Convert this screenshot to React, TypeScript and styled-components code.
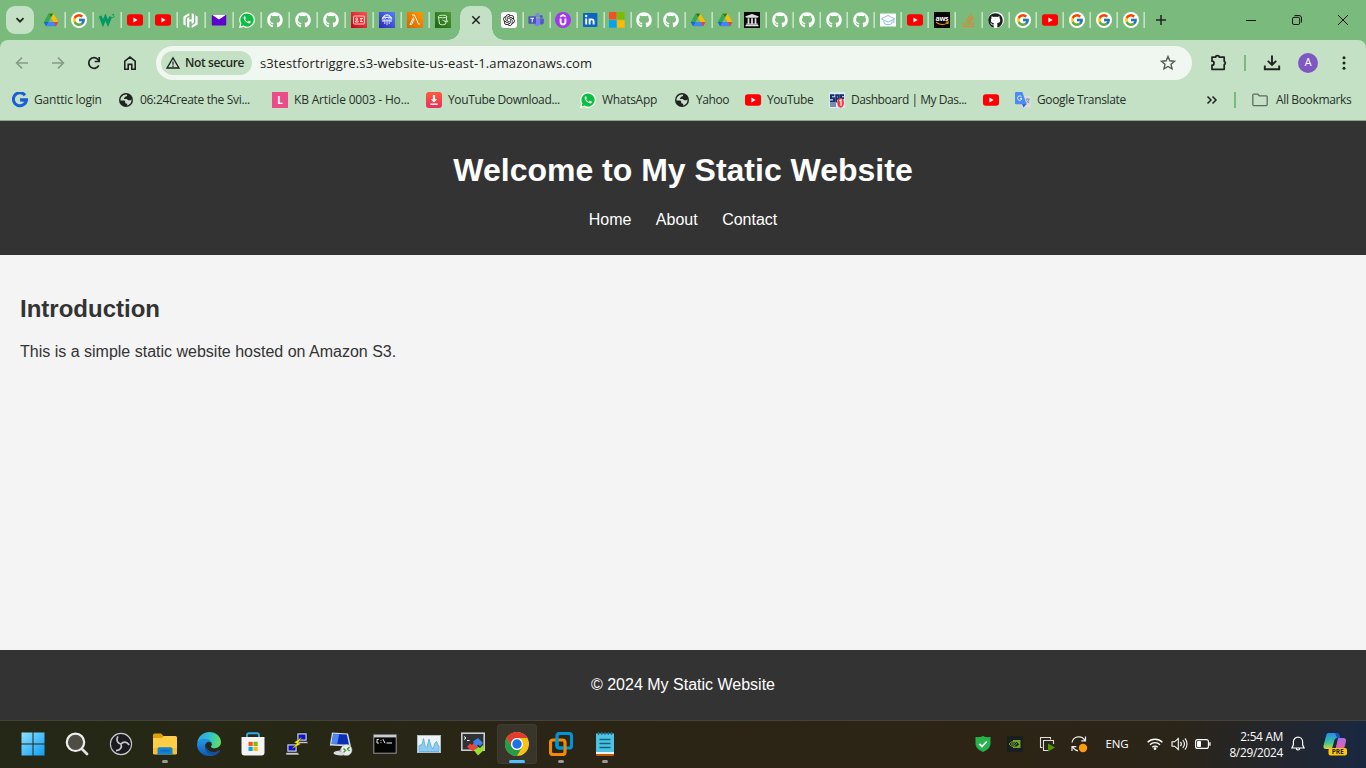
import React from 'react';
import styled, { createGlobalStyle } from 'styled-components';
import { FcGoogle } from 'react-icons/fc';
import { FaGithub, FaStackOverflow, FaUniversity } from 'react-icons/fa';
import { SiHashicorp } from 'react-icons/si';
import { RiOpenaiFill } from 'react-icons/ri';

const ui = '"Open Sans", "Noto Sans", sans-serif';

const Global = createGlobalStyle`
  * { box-sizing: border-box; }
  html, body { margin: 0; padding: 0; height: 768px; overflow: hidden; }
  svg { display: block; flex: none; }
`;

const Screen = styled.div`
  width: 1366px;
  height: 768px;
  display: flex;
  flex-direction: column;
  overflow: hidden;
  background: #f4f4f4;
`;

/* ---------- browser chrome ---------- */

const TabStrip = styled.div`
  height: 40px;
  flex: none;
  display: flex;
  align-items: center;
  background: #7abb7d;
  padding-left: 6px;
`;

const SearchTabs = styled.div`
  width: 28px;
  height: 28px;
  border-radius: 9px;
  background: #c5e1c5;
  display: grid;
  place-items: center;
  margin-right: 3px;
`;

const Tab = styled.div<{ $w: number; $last?: boolean }>`
  width: ${(p) => p.$w}px;
  height: 16px;
  flex: none;
  display: flex;
  align-items: center;
  padding-left: ${(p) => (p.$w - 16) / 2}px;
  box-shadow: ${(p) => (p.$last ? 'none' : '1px 0 0 #c5e1c5, inset -1px 0 0 #a9d2aa')};
`;

const ActiveTab = styled.div`
  width: 32px;
  height: 34px;
  margin: 6px 3.7px 0 3px;
  flex: none;
  display: grid;
  place-items: center;
  padding-bottom: 6px;
  background: #c5e1c5;
  border-radius: 10px 10px 0 0;
  position: relative;
  &::before,
  &::after {
    content: '';
    position: absolute;
    bottom: 0;
    width: 12px;
    height: 12px;
  }
  &::before {
    left: -12px;
    background: radial-gradient(circle at 0 0, transparent 11.5px, #c5e1c5 12px);
  }
  &::after {
    right: -12px;
    background: radial-gradient(circle at 100% 0, transparent 11.5px, #c5e1c5 12px);
  }
`;

const NewTab = styled.div`
  width: 16px;
  margin-left: 8.3px;
`;

const WindowButtons = styled.div`
  margin-left: auto;
  display: flex;
  width: 138px;
`;

const WindowButton = styled.div`
  width: 46px;
  display: grid;
  place-items: center;
`;

const ToolbarBack = styled.div`
  background: #7abb7d;
  flex: none;
`;

const ToolbarPanel = styled.div`
  height: 81px;
  background: #c5e1c5;
  border-radius: 8px 8px 0 0;
  border-bottom: 1px solid #8fa591;
`;

const Toolbar = styled.div`
  height: 46px;
  display: flex;
  align-items: center;
  padding-left: 4px;
`;

const ToolButton = styled.div<{ $w?: number }>`
  width: ${(p) => p.$w ?? 36}px;
  display: grid;
  place-items: center;
  flex: none;
`;

const AddressBar = styled.div`
  width: 1036px;
  height: 34px;
  margin-left: 8px;
  border-radius: 17px;
  background: #f0f7f0;
  display: flex;
  align-items: center;
  padding: 0 15px 0 5px;
  flex: none;
`;

const SecurityChip = styled.div`
  width: 91px;
  height: 24px;
  border-radius: 12px;
  background: #c5e1c5;
  display: flex;
  align-items: center;
  padding-left: 5px;
  gap: 5px;
  font: 600 12px/24px ${ui};
  letter-spacing: -0.4px;
  white-space: nowrap;
  color: #1f2a20;
`;

const Url = styled.div`
  margin-left: 8px;
  flex: 1;
  font: 400 13px/20px ${ui};
  letter-spacing: 0.12px;
  color: #1f2320;
`;

const Divider = styled.div`
  width: 2px;
  height: 16px;
  background: #7abb7d;
  flex: none;
`;

const Avatar = styled.div`
  width: 20px;
  height: 20px;
  border-radius: 50%;
  background: #7e57c2;
  color: #fff;
  font: 400 11px/20px Roboto, sans-serif;
  text-align: center;
`;

const Bookmarks = styled.div`
  height: 28px;
  display: flex;
  align-items: center;
  padding-left: 12px;
`;

const Bookmark = styled.div<{ $w: number; $ls?: number }>`
  width: ${(p) => p.$w}px;
  flex: none;
  display: flex;
  align-items: center;
  gap: 6px;
  white-space: nowrap;
  font: 400 12px/20px ${ui};
  letter-spacing: ${(p) => p.$ls ?? 0}px;
  color: #26302a;
`;

const AllBookmarks = styled(Bookmark)`
  margin-left: 16px;
  gap: 8px;
`;

/* ---------- web page ---------- */

const PageHeader = styled.header`
  height: 134px;
  flex: none;
  background: #333;
  color: #fff;
  text-align: center;
  font-family: Arial, "Liberation Sans", sans-serif;
  padding-top: 30px;
`;

const Title = styled.h1`
  margin: 0;
  font-size: 32px;
  line-height: 38px;
  font-weight: 700;
`;

const Nav = styled.nav`
  margin-top: 21px;
  font-size: 16px;
  line-height: 19px;
`;

const NavLink = styled.a`
  color: #fff;
  padding: 0 10px;
`;

const Main = styled.main`
  flex: 1;
  padding: 40px 20px 0;
  font-family: Arial, "Liberation Sans", sans-serif;
  color: #333;
  background: #f4f4f4;
`;

const SectionTitle = styled.h2`
  margin: 0;
  font-size: 24px;
  line-height: 28px;
`;

const Paragraph = styled.p`
  margin: 19px 0 0;
  font-size: 16px;
  line-height: 19px;
`;

const PageFooter = styled.footer`
  height: 70px;
  flex: none;
  background: #333;
  color: #fff;
  text-align: center;
  font: 400 16px/69px Arial, "Liberation Sans", sans-serif;
`;

/* ---------- taskbar ---------- */

const Taskbar = styled.div`
  height: 48px;
  flex: none;
  display: flex;
  align-items: center;
  padding-left: 11px;
  box-shadow: inset 0 1px 0 #46443a;
  background: linear-gradient(90deg, #252816 0%, #272716 22%, #2a2516 40%, #2d2415 72%, #2b2519 86%, #24262b 93%, #192840 100%);
  color: #fff;
`;

const AppButton = styled.div<{ $active?: boolean }>`
  width: 40px;
  height: 40px;
  margin: 0 2px;
  flex: none;
  display: grid;
  place-items: center;
  border-radius: 4px;
  position: relative;
  background: ${(p) => (p.$active ? '#39352a' : 'transparent')};
  box-shadow: ${(p) => (p.$active ? 'inset 0 0 0 1px #403c31' : 'none')};
`;

const Running = styled.div<{ $active?: boolean }>`
  position: absolute;
  bottom: 1px;
  left: 50%;
  transform: translateX(-50%);
  width: ${(p) => (p.$active ? 16 : 6)}px;
  height: 3px;
  border-radius: 2px;
  background: ${(p) => (p.$active ? '#4cc2ff' : '#9b9a93')};
`;

const Tray = styled.div`
  margin-left: auto;
  display: flex;
  align-items: center;
  height: 48px;
  width: 399px;
`;

const TrayItem = styled.div<{ $w: number }>`
  width: ${(p) => p.$w}px;
  flex: none;
  display: grid;
  place-items: center;
`;

const Language = styled.div`
  width: 44px;
  text-align: center;
  font: 400 11.5px/16px ${ui};
  letter-spacing: -0.2px;
`;

const Clock = styled.div`
  width: 64px;
  text-align: right;
  font: 400 11.8px/16px ${ui};
  letter-spacing: -0.25px;
  white-space: nowrap;
`;

/* ---------- site icons ---------- */

const Drive = () => (
  <svg width="16" height="16" viewBox="0 0 16 16">
    <path d="M5.6 1.4 8 5.6 3.2 13.9.9 9.9z" fill="#34a853" />
    <path d="M10.4 1.4 15.4 10h-4.8L5.6 1.4z" fill="#fbbc04" />
    <path d="M5.6 1.4h4.8L8 5.6z" fill="#188038" />
    <path d="M5.5 10h9.9l-2.4 4.2H3.1z" fill="#4285f4" />
    <path d="M10.6 10h4.8L13 14.2z" fill="#ea4335" />
    <path d="M.7 10h4.8l-2.4 4.2z" fill="#1967d2" />
  </svg>
);

const Disc = styled.div`
  width: 16px;
  height: 16px;
  border-radius: 50%;
  background: #fff;
  display: grid;
  place-items: center;
`;

const Google = () => (
  <Disc>
    <FcGoogle size={14} />
  </Disc>
);

const W3 = () => (
  <svg width="16" height="16" viewBox="0 0 16 16">
    <path d="M1.2 4 4 11.200 6.400 5.200l2.600 6 2.600-6.600" fill="none" stroke="#059862" strokeWidth="2.900" />
    <path d="M12.800 2.400h2.200l-1.100 1.200c1.600.1 1.400 2-.2 2-.6 0-1-.3-1.200-.7" fill="none" stroke="#059862" strokeWidth=".8" />
  </svg>
);

const YouTube = () => (
  <svg width="16" height="16" viewBox="0 0 16 16">
    <rect x="0" y="2.2" width="16" height="11.6" rx="2.8" fill="#f00" />
    <path d="M6.4 5.6v4.8L10.6 8z" fill="#fff" />
  </svg>
);

const Mail = () => (
  <svg width="16" height="16" viewBox="0 0 16 16">
    <rect x=".8" y="2.8" width="14.4" height="10.8" rx=".8" fill="#5f01d1" />
    <path d="M1 2.8h14L8.4 7.300a.7.7 0 0 1-.8 0z" fill="#fff" />
  </svg>
);

const WhatsApp = () => (
  <svg width="16" height="16" viewBox="0 0 16 16">
    <path d="M8 .2a7.8 7.8 0 0 0-6.9 11.4L.1 15.9l4.4-1A7.8 7.8 0 1 0 8 .2z" fill="#fff" />
    <path d="M8 1.4a6.6 6.6 0 0 0-5.6 10.1l-.7 2.8 2.9-.7A6.6 6.6 0 1 0 8 1.4z" fill="#09c03f" />
    <path d="M5.6 4.3c-.9.5-1.2 1.6-.7 2.7.9 2 2.2 3.4 4.4 4.3 1.1.4 2.2 0 2.5-1 .1-.6 0-.7-1.8-1.5-.5-.1-.7.9-1.1 1-.9-.1-2.6-1.7-2.8-2.5.1-.4.8-.7.6-1.3-.5-1.4-.6-1.7-1.1-1.7z" fill="#fff" />
  </svg>
);

const Square = styled.div<{ $bg: string; $r?: number }>`
  width: 16px;
  height: 16px;
  flex: none;
  border-radius: ${(p) => p.$r ?? 0}px;
  background: ${(p) => p.$bg};
  display: grid;
  place-items: center;
  color: #fff;
`;

const IdCard = () => (
  <Square $bg="linear-gradient(45deg,#bd0816,#ff5252)">
    <svg width="12" height="12" viewBox="0 0 12 12" fill="none" stroke="#ffe9e9" strokeWidth=".9">
      <rect x=".6" y="2" width="10.8" height="8" rx=".6" />
      <circle cx="3.7" cy="4.9" r="1" />
      <path d="M2.2 8V7.3c.6-.8 2.4-.8 3 0V8zM7 4.5h3M7 6h2M7 7.6h3" />
    </svg>
  </Square>
);

const Cognito = () => (
  <Square $bg="linear-gradient(45deg,#2e27ad,#527fff)">
    <svg width="12" height="12" viewBox="0 0 12 12" fill="none" stroke="#e4eaff" strokeWidth=".9">
      <path d="M1.200 5.500a4.800 4.800 0 0 1 9.600 0M2 8V5.500a4 4 0 0 1 8 0V8M3.800 10V5.500a2.200 2.200 0 0 1 4.400 0V10M6 5v6.200M1.200 3.500h9.600M1.500 6.800h9" />
    </svg>
  </Square>
);

const Lambda = () => (
  <Square $bg="linear-gradient(45deg,#d96300,#ff9900)">
    <svg width="12" height="12" viewBox="0 0 12 12" fill="none" stroke="#fff" strokeWidth="1">
      <path d="M3 1h2.5l4 9h1.4M5.2 4.9 2.6 10.6H.9L4.5 3.4" />
    </svg>
  </Square>
);

const Bucket = () => (
  <Square $bg="linear-gradient(45deg,#1b660f,#4f9a34)">
    <svg width="12" height="12" viewBox="0 0 12 12" fill="none" stroke="#eaf6e6" strokeWidth=".9">
      <ellipse cx="5.6" cy="2.5" rx="4.2" ry="1.3" />
      <path d="M1.4 2.6 2.6 10c1.6 1.1 4.4 1.1 6 0l1.2-7.4M5.4 6c1.6 1 4.2 2 5.2 1.6.6-.4-.3-1.2-1.2-1.7" />
    </svg>
  </Square>
);

const Teams = () => (
  <svg width="16" height="16" viewBox="0 0 16 16">
    <circle cx="13.2" cy="4.4" r="1.5" fill="#5059c9" />
    <circle cx="9.6" cy="3.2" r="2.1" fill="#7b83eb" />
    <path d="M11 6.4h4.3c.4 0 .5.2.5.5v3.4c0 3-4 3-4.4.4z" fill="#5059c9" />
    <path d="M6 6.4h6.2v4.6c0 4.4-6.2 4.2-6.2 0z" fill="#7b83eb" />
    <rect x=".4" y="4.2" width="7.6" height="7.6" rx=".7" fill="#4b53bc" />
    <path d="M2.4 6.3H6M4.2 6.3v4" stroke="#fff" strokeWidth="1" />
  </svg>
);

const Udemy = () => (
  <svg width="16" height="16" viewBox="0 0 16 16">
    <circle cx="8" cy="8" r="8" fill="#a435f0" />
    <path d="M5.2 4.7 8 3l2.8 1.7M5.6 6.4v3.7c0 3.2 4.8 3.2 4.8 0V6.4" fill="none" stroke="#fff" strokeWidth="1.9" />
  </svg>
);

const LinkedIn = () => (
  <svg width="16" height="16" viewBox="0 0 16 16">
    <rect x="1" y="1" width="14.4" height="14" rx="1" fill="#0a66c2" />
    <path d="M4.2 6.4v6.2M7.6 6.4v6.2M7.6 9.4c0-2.6 4-2.8 4-.2v3.4" fill="none" stroke="#fff" strokeWidth="1.9" />
    <circle cx="4.2" cy="4" r="1.2" fill="#fff" />
  </svg>
);

const Microsoft = () => (
  <svg width="16" height="16" viewBox="0 0 16 16">
    <path d="M0 0h7.5v7.5H0z" fill="#f25022" />
    <path d="M8.2 0h7.5v7.5H8.2z" fill="#7fba00" />
    <path d="M0 8.2h7.5v7.5H0z" fill="#00a4ef" />
    <path d="M8.2 8.2h7.5v7.5H8.2z" fill="#ffb900" />
  </svg>
);

const Cap = () => (
  <svg width="16" height="16" viewBox="0 0 16 16">
    <rect y="1.5" width="16" height="13" fill="#fff" />
    <path d="M1.5 6.8 8 3.4l6.5 3.4L8 10.2zM4 8.4v3c2.4 1.8 5.6 1.8 8 0v-3M13.8 7.2v4" fill="none" stroke="#6db0dc" strokeWidth=".8" />
  </svg>
);

const Hashicorp = () => <SiHashicorp size={15} color="#fff" />;
const StackOverflow = () => <FaStackOverflow size={15} color="#e9812b" />;
const GitHubWhite = () => <FaGithub size={16} color="#fff" />;
const GitHubDark = () => (
  <Disc>
    <FaGithub size={15} color="#1b1f23" />
  </Disc>
);
const OpenAI = () => (
  <Square $bg="#fff" $r={3}>
    <RiOpenaiFill size={14} color="#111" />
  </Square>
);
const Bank = () => (
  <Square $bg="#080808">
    <FaUniversity size={14} color="#ddd" />
  </Square>
);
const Aws = () => (
  <svg width="16" height="16" viewBox="0 0 16 16">
    <rect width="16" height="16" fill="#050505" />
    <text x="8" y="8.6" fontSize="7" fontWeight="700" textAnchor="middle" fill="#fff" fontFamily="Open Sans, sans-serif" textLength="13">aws</text>
    <path d="M2 10.2c4 2.8 8.4 2.8 11.6.7M11.8 10h2.5l-.6 2.2" fill="none" stroke="#f90" strokeWidth="1.1" />
  </svg>
);

const Globe = () => (
  <svg width="16" height="16" viewBox="0 0 16 16">
    <circle cx="8" cy="8" r="7" fill="#202322" />
    <path d="M8.6 2.500c1.300.7.2 2-.8 1.900-1 0-.7 1-1.500 1.300-.8.5-.4 1.200.4 1.200h1.900c.9 0 .8 1.200 1.600 1.400h1.600c1 0 1.500-.5 1.700-1 .3 2.800-1.400 5.600-4.300 6.200v-1c0-.7-.3-1-1-1-.8 0-1-.7-1-1.500 0-1-.7-1.500-1.500-1.500H2.500C2.300 5.500 4.500 2.300 8.600 2.500z" fill="#c5e1c5" />
  </svg>
);

const Ganttic = () => (
  <svg width="16" height="16" viewBox="0 0 16 16">
    <path d="M13 3.2A6.5 6.5 0 1 0 14.4 8H8" fill="none" stroke="#1a5fd8" strokeWidth="3" />
    <path d="M8.2 6.5h7.6v3H10z" fill="#1a5fd8" />
  </svg>
);

const Letter = styled(Square)`
  font: 700 10px/16px "Open Sans", sans-serif;
`;

const Downloader = () => (
  <Square $bg="linear-gradient(#ff5b3a,#e8305d)" $r={3}>
    <svg width="16" height="16" viewBox="0 0 16 16" fill="none" stroke="#fff">
      <path d="M8 3v6" strokeWidth="2.2" />
      <path d="M4.8 7.2h6.4L8 10.6z" fill="#fff" stroke="none" />
      <path d="M4.3 12.2h7.4" strokeWidth="1.4" />
    </svg>
  </Square>
);

const Sps = () => (
  <svg width="16" height="16" viewBox="0 0 16 16">
    <rect width="16" height="16" fill="#dce8f4" />
    <path d="M5.400 3.300H2v3h3v3.200H1M7.200 10.500V3.300h2.600v3.400H7.200M15 3.300h-3v3h3" fill="none" stroke="#15306e" strokeWidth="2" />
    <path d="M1 12h6M1 14h6" stroke="#15306e" strokeWidth="1.200" />
    <ellipse cx="11.600" cy="10.800" rx="3.300" ry="4.900" fill="#ee3b40" />
    <path d="m10.400 8.800 1.600-1v6" stroke="#fff" strokeWidth="1.200" fill="none" />
  </svg>
);

const Translate = () => (
  <svg width="16" height="16" viewBox="0 0 16 16">
    <rect x="6.5" y="4" width="9.2" height="11.6" rx="1" fill="#dadce0" />
    <path d="M8.5 15.6 11.6 12H7z" fill="#3a5bc7" />
    <path d="M1 0h6.4l4.2 12.2H1a1 1 0 0 1-1-1V1a1 1 0 0 1 1-1z" fill="#4b8bf5" />
    <path d="M6.6 4.9a2.2 2.2 0 1 0 .3 1.8H5" fill="none" stroke="#fff" strokeWidth=".9" />
    <path d="M10.6 7.2h4.2M12.7 6.2v1M14 7.4c-.5 2-1.6 3-2.8 3.8M11.4 8c.6 1.4 1.7 2.4 2.9 3" fill="none" stroke="#76808a" strokeWidth=".8" />
  </svg>
);

const firstTabs: React.ComponentType[] = [Drive, Google, W3, YouTube, YouTube, Hashicorp, Mail, WhatsApp, GitHubWhite, GitHubWhite, GitHubWhite, IdCard, Cognito, Lambda, Bucket];
const moreTabs: React.ComponentType[] = [OpenAI, Teams, Udemy, LinkedIn, Microsoft, GitHubWhite, GitHubWhite, Drive, Drive, Bank, GitHubWhite, GitHubWhite, GitHubWhite, GitHubWhite, Cap, YouTube, Aws, StackOverflow, GitHubDark, Google, YouTube, Google, Google, Google];

/* ---------- taskbar icons ---------- */

const Start = () => (
  <svg width="24" height="24" viewBox="0 0 24 24">
    <defs>
      <linearGradient id="st" x1="0" y1="0" x2="24" y2="24" gradientUnits="userSpaceOnUse">
        <stop stopColor="#8fe3ff" />
        <stop offset="1" stopColor="#0a9bf5" />
      </linearGradient>
    </defs>
    <path d="M.5.5h11v11H.5zM12.5.5h11v11h-11zM.5 12.5h11v11H.5zM12.5 12.5h11v11h-11z" fill="url(#st)" />
  </svg>
);

const Search = () => (
  <svg width="24" height="24" viewBox="0 0 24 24">
    <circle cx="10.5" cy="10.3" r="8.7" fill="#4d4d44" stroke="#eee" strokeWidth="2.2" />
    <path d="m17 17 5 5" stroke="#e2e2e2" strokeWidth="2.8" strokeLinecap="round" />
  </svg>
);

const Obs = () => (
  <svg width="24" height="24" viewBox="0 0 24 24">
    <circle cx="12" cy="12" r="10.600" fill="#1b1a1f" stroke="#c9c9c9" strokeWidth="1.100" />
    <g fill="none" stroke="#c6c6c8" strokeWidth="1.700">
      <path d="M12 12c-3.500-.6-5.200-3.800-3.200-7.600" />
      <path d="M12 12c-3.500-.6-5.200-3.800-3.200-7.600" transform="rotate(120 12 12)" />
      <path d="M12 12c-3.500-.6-5.200-3.800-3.200-7.600" transform="rotate(240 12 12)" />
    </g>
  </svg>
);

const Explorer = () => (
  <svg width="24" height="24" viewBox="0 0 24 24">
    <path d="M0 3a1.500 1.500 0 0 1 1.500-1.500H8L10.500 4H22v5H0z" fill="#e0a008" />
    <path d="M0 6h8.500L11 4h11.500A1.500 1.500 0 0 1 24 5.500V22H0z" fill="#ffce47" />
    <path d="M0 16h24v5a1.500 1.500 0 0 1-1.500 1.500h-21A1.500 1.500 0 0 1 0 21z" fill="#fbbf2d" />
    <path d="M4.500 22.500V17A1.800 1.800 0 0 1 6.300 15.200h11.400a1.800 1.800 0 0 1 1.800 1.800v5.500z" fill="#1283d0" />
    <path d="M7.500 18.800h9" stroke="#0b5fa6" strokeWidth="1" />
  </svg>
);

const Edge = () => (
  <svg width="24" height="24" viewBox="0 0 24 24">
    <defs>
      <linearGradient id="eg" x1="0" y1="4" x2="24" y2="10" gradientUnits="userSpaceOnUse">
        <stop stopColor="#2fa5e0" />
        <stop offset=".55" stopColor="#33c3c8" />
        <stop offset="1" stopColor="#66df57" />
      </linearGradient>
      <linearGradient id="eb" x1="0" y1="10" x2="0" y2="24" gradientUnits="userSpaceOnUse">
        <stop stopColor="#208fe0" />
        <stop offset="1" stopColor="#0d5bad" />
      </linearGradient>
    </defs>
    <path d="M.2 10.500C1.500 3.500 7 0 12.300 0 19 0 24 4.900 24 10c0 4-3.200 6.200-6.200 6.200-2.200 0-3.900-.7-3.900-1.500 0-.6 1-1 1-2.500 0-2.200-2.400-4.200-5.300-4.200C5.200 8 1.200 8.700.2 10.500z" fill="url(#eg)" />
    <path d="M0 12C.6 8.500 4 6.500 8 6.700c3.900.1 6.900 2.500 6.900 5.300-.8-1.600-2-2.300-3.300-2.300-2.300.5-3.700 2.600-3.600 5 .1 3.400 3.400 6.300 7.200 6.300 2.600 0 5-.9 6.700-2.400.6-.4 1.100.1.800.6A12 12 0 0 1 12 24C5.200 24-.2 18.500 0 12z" fill="url(#eb)" />
    <path d="M8 13c-.8 4.600 2.600 10.600 9 9.900a12 12 0 0 0 5.700-3.700c.3-.5-.2-1-.8-.6-5 3.600-12.500.2-13.900-5.600z" fill="#124f9b" />
  </svg>
);

const Store = () => (
  <svg width="24" height="24" viewBox="0 0 24 24">
    <path d="M6 6V3A2 2 0 0 1 8 1.200h8A2 2 0 0 1 18 3v3" fill="none" stroke="#28afea" strokeWidth="1.900" />
    <path d="M.5 5h23v15.500a3 3 0 0 1-3 3h-17a3 3 0 0 1-3-3z" fill="#f4f4f4" />
    <path d="M7.500 9.800h4.200V14H7.500z" fill="#f25022" />
    <path d="M12.500 9.800h4.200V14h-4.200z" fill="#7fba00" />
    <path d="M7.500 14.800h4.200V19H7.500z" fill="#00a4ef" />
    <path d="M12.500 14.800h4.200V19h-4.200z" fill="#ffb900" />
  </svg>
);

const Putty = () => (
  <svg width="24" height="24" viewBox="0 0 24 24">
    <path d="M12 1h10v8H12z" fill="#d6d6d6" stroke="#111" strokeWidth=".6" />
    <path d="M13.500 2.500h7v5h-7z" fill="#0a12d8" />
    <path d="M11 9.500h11l1.500 2H12z" fill="#c8c8c8" stroke="#111" strokeWidth=".5" />
    <path d="M2 12h10v8H2z" fill="#d6d6d6" stroke="#111" strokeWidth=".6" />
    <path d="M3.500 13.500h7v5h-7z" fill="#0a12d8" />
    <path d="M1 20.500h12l1.500 2.500H.8z" fill="#c8c8c8" stroke="#111" strokeWidth=".5" />
    <path d="M17 5 9 10.500l3 .9L6.500 17l9.500-5.200-3-1z" fill="#fff200" stroke="#4a4a00" strokeWidth=".4" />
  </svg>
);

const Remote = () => (
  <svg width="24" height="24" viewBox="0 0 24 24">
    <ellipse cx="12" cy="21" rx="7.500" ry="2.600" fill="#d9dbdf" />
    <path d="m12 16 3-1 2 5h-7z" fill="#a9adb3" />
    <path d="M3 .5 19 1.500l3 13L.8 13.500z" fill="#d7dbe2" />
    <path d="m4.200 1.800 13.600.8L20 12.800 2.500 12z" fill="#0a2fb4" />
    <path d="m4.200 1.800 6 .4-2 10-5.700-.2z" fill="#4f86ee" />
    <circle cx="17.500" cy="18" r="5.500" fill="#ececec" stroke="#aaa" strokeWidth=".5" />
    <path d="m14.500 16.500 2 2-2 2M20.500 15l-2 2 2 2" fill="none" stroke="#3c9a3a" strokeWidth="1.400" />
  </svg>
);

const Terminal = () => (
  <svg width="24" height="24" viewBox="0 0 24 24">
    <rect x=".8" y="2.800" width="22.400" height="18.400" fill="#050505" stroke="#979797" strokeWidth="1" />
    <path d="M1 3h22v2.400H1z" fill="#c8ccd3" />
    <path d="M5.800 7.500H4v3.500h1.800M8 8.200v.8M8 10.200v.9M10 7.200l2 4M13.500 11h5.500" stroke="#f1f1f1" strokeWidth="1" fill="none" />
  </svg>
);

const Monitor = () => (
  <svg width="24" height="24" viewBox="0 0 24 24">
    <rect x=".5" y="3.500" width="23" height="17" fill="#eef3f7" stroke="#b6bcc4" />
    <path d="M2 19.500v-6l3-1 1.500-6 1.500 7 2 2 2-8.500 2 7 2 3 2-6 1.500-1.500L21 13l1 1v5.500z" fill="#8ccaf0" stroke="#5fb0e2" strokeWidth=".9" />
  </svg>
);

const Moba = () => (
  <svg width="24" height="24" viewBox="0 0 24 24">
    <rect x=".8" y="1.200" width="22.400" height="17" fill="#2f3234" stroke="#d5d5d5" strokeWidth="1.500" />
    <path d="m3 4.500 2 1.500-2 1.500M6 8.500h2.500" stroke="#fff" fill="none" />
    <path d="m6 15 3-3.500 2 1.500 2-2.500 4 4-5 5z" fill="#ed4340" />
    <path d="m12 9.500 5-3.500 5 5-3 3-2-1.500L15 15z" fill="#3c82e8" />
    <path d="m13 18.500 4-3.500 2 1 3-3 1.500 4.500-6.500 6z" fill="#94df2c" />
  </svg>
);

const Chrome = () => (
  <svg width="24" height="24" viewBox="0 0 24 24">
    <circle cx="12" cy="12" r="12" fill="#fbc116" />
    <path d="M12 0A12 12 0 0 1 22.400 6H12a6 6 0 0 0-5.200 9L1.600 6A12 12 0 0 1 12 0z" fill="#e33b2e" />
    <path d="M1.600 6l5.200 9A6 6 0 0 0 12 18a6 6 0 0 0 5.200-3L12 24A12 12 0 0 1 1.600 6z" fill="#269b4b" />
    <circle cx="12" cy="12" r="6" fill="#fff" />
    <circle cx="12" cy="12" r="4.700" fill="#1a73e8" />
  </svg>
);

const Vmware = () => (
  <svg width="24" height="24" viewBox="0 0 24 24" fill="none">
    <rect x="8" y="1.500" width="14.500" height="14.500" rx="2.500" stroke="#0095d9" strokeWidth="3.200" />
    <rect x="1.500" y="8" width="14.500" height="14.500" rx="2.500" stroke="#f38b00" strokeWidth="3.200" />
    <path d="M8 6v7.500A2.500 2.500 0 0 0 10.500 16h4" stroke="#0095d9" strokeWidth="3.200" />
  </svg>
);

const Notepad = () => (
  <svg width="24" height="24" viewBox="0 0 24 24">
    <path d="M3 20h18v2.500a1.500 1.500 0 0 1-1.500 1.500h-15A1.500 1.500 0 0 1 3 22.500z" fill="#c2590f" />
    <path d="M3 18h18v4H3z" fill="#f4f4f4" />
    <path d="M3 1.500h18V20H3z" fill="#4dc3e3" />
    <path d="M5.500 0v3M8.700 0v3M12 0v3M15.300 0v3M18.500 0v3" stroke="#1f6f8c" strokeWidth="1.200" />
    <path d="M6.500 7.500h11M6.500 11.500h11M6.500 15.500h11" stroke="#12607f" strokeWidth="1.300" />
  </svg>
);

const apps: { Icon: React.FC; running?: boolean; active?: boolean }[] = [
  { Icon: Start },
  { Icon: Search },
  { Icon: Obs },
  { Icon: Explorer, running: true },
  { Icon: Edge },
  { Icon: Store },
  { Icon: Putty },
  { Icon: Remote },
  { Icon: Terminal },
  { Icon: Monitor },
  { Icon: Moba },
  { Icon: Chrome, running: true, active: true },
  { Icon: Vmware, running: true },
  { Icon: Notepad, running: true },
];

const line = { fill: 'none', stroke: '#1f2320' } as const;

export default function App() {
  return (
    <Screen>
      <Global />
      <TabStrip>
        <SearchTabs>
          <svg width="10" height="10" viewBox="0 0 10 10"><path d="m1.500 3.200 3.500 3.500 3.500-3.500" {...line} strokeWidth="1.700" /></svg>
        </SearchTabs>
        {firstTabs.map((Icon, i) => (
          <Tab key={i} $w={28} $last={i === firstTabs.length - 1}><Icon /></Tab>
        ))}
        <ActiveTab>
          <svg width="10" height="10" viewBox="0 0 10 10"><path d="m1.300 1.300 7.400 7.400M8.700 1.300 1.300 8.700" {...line} strokeWidth="1.500" /></svg>
        </ActiveTab>
        {moreTabs.map((Icon, i) => (
          <Tab key={i} $w={27.04}><Icon /></Tab>
        ))}
        <NewTab>
          <svg width="16" height="16" viewBox="0 0 16 16"><path d="M8 3v10M3 8h10" {...line} strokeWidth="1.500" /></svg>
        </NewTab>
        <WindowButtons>
          <WindowButton><svg width="10" height="10" viewBox="0 0 10 10"><path d="M0 5.500h10" stroke="#111" /></svg></WindowButton>
          <WindowButton>
            <svg width="10" height="10" viewBox="0 0 10 10" fill="none" stroke="#111">
              <rect x=".5" y="2.300" width="7.200" height="7.200" rx="1.500" />
              <path d="M2.500.5h4.500a2.500 2.500 0 0 1 2.500 2.500v4.500" />
            </svg>
          </WindowButton>
          <WindowButton><svg width="10" height="10" viewBox="0 0 10 10"><path d="m0 0 10 10M10 0 0 10" stroke="#111" /></svg></WindowButton>
        </WindowButtons>
      </TabStrip>

      <ToolbarBack>
        <ToolbarPanel>
          <Toolbar>
            <ToolButton><svg width="16" height="16" viewBox="0 0 16 16"><path d="M14 8H2.800M8 2.600 2.600 8 8 13.400" fill="none" stroke="#859c87" strokeWidth="1.600" /></svg></ToolButton>
            <ToolButton><svg width="16" height="16" viewBox="0 0 16 16"><path d="M2 8h11.200M8 2.600 13.400 8 8 13.400" fill="none" stroke="#859c87" strokeWidth="1.600" /></svg></ToolButton>
            <ToolButton>
              <svg width="16" height="16" viewBox="0 0 16 16">
                <path d="M12.800 10.400A5.300 5.300 0 1 1 12.200 4.700L13 5.800" {...line} strokeWidth="1.700" />
                <path d="M13.200 2v4.500H8.700" {...line} strokeWidth="1.700" />
              </svg>
            </ToolButton>
            <ToolButton>
              <svg width="16" height="16" viewBox="0 0 16 16"><path d="M2.800 14.200V6.200L8 2.100l5.200 4.100v8H9.800V9.400H6.200v4.800z" {...line} strokeWidth="1.600" /></svg>
            </ToolButton>
            <AddressBar>
              <SecurityChip>
                <svg width="14" height="14" viewBox="0 0 14 14">
                  <path d="M7 1.900 12.900 12H1.100z" {...line} strokeWidth="1.300" />
                  <path d="M7 5.400v3.400M7 9.600v1.300" {...line} strokeWidth="1.200" />
                </svg>
                Not secure
              </SecurityChip>
              <Url>s3testfortriggre.s3-website-us-east-1.amazonaws.com</Url>
              <svg width="18" height="18" viewBox="0 0 18 18">
                <path d="m9 2.500 1.850 4.300 4.650.4-3.500 3.100 1.050 4.600L9 12.500l-4.050 2.400L6 10.300 2.500 7.200l4.650-.4z" fill="none" stroke="#515a53" strokeWidth="1.400" />
              </svg>
            </AddressBar>
            <ToolButton $w={52}>
              <svg width="18" height="18" viewBox="0 0 18 18">
                <path d="M3 3.200h3.700a1.800 1.600 0 0 1 3.600 0h4.900v4.200a1.700 1.700 0 0 1 0 3.200v4.700H3v-4.100a2 2 0 0 0 0-4z" {...line} strokeWidth="1.700" strokeLinejoin="round" />
              </svg>
            </ToolButton>
            <Divider />
            <ToolButton $w={52}>
              <svg width="18" height="18" viewBox="0 0 18 18">
                <path d="M9 1.500v9M4.800 6.800 9 11l4.200-4.200M1.800 11.500v3.700h14.400v-3.700" {...line} strokeWidth="1.900" />
              </svg>
            </ToolButton>
            <ToolButton $w={20}><Avatar>A</Avatar></ToolButton>
            <ToolButton $w={52}>
              <svg width="16" height="16" viewBox="0 0 16 16" fill="#1f2320"><circle cx="8" cy="2.800" r="1.500" /><circle cx="8" cy="8" r="1.500" /><circle cx="8" cy="13.200" r="1.500" /></svg>
            </ToolButton>
          </Toolbar>
          <Bookmarks>
            <Bookmark $w={106} $ls={-0.2}><Ganttic />Ganttic login</Bookmark>
            <Bookmark $w={154} $ls={-0.33}><Globe />06:24Create the Svi...</Bookmark>
            <Bookmark $w={154} $ls={-0.18}><Letter $bg="#ea4c89">L</Letter>KB Article 0003 - Ho...</Bookmark>
            <Bookmark $w={154} $ls={-0.37}><Downloader />YouTube Download...</Bookmark>
            <Bookmark $w={94} $ls={-0.3}><WhatsApp />WhatsApp</Bookmark>
            <Bookmark $w={71} $ls={-0.4}><Globe />Yahoo</Bookmark>
            <Bookmark $w={84} $ls={-0.45}><YouTube />YouTube</Bookmark>
            <Bookmark $w={154} $ls={-0.46}><Sps />Dashboard | My Das...</Bookmark>
            <Bookmark $w={32}><YouTube /></Bookmark>
            <Bookmark $w={189} $ls={-0.36}><Translate />Google Translate</Bookmark>
            <Bookmark $w={30}>
              <svg width="16" height="16" viewBox="0 0 16 16"><path d="m3.500 4.500 3.500 3.500-3.500 3.500M8.500 4.500 12 8l-3.500 3.500" {...line} strokeWidth="1.500" /></svg>
            </Bookmark>
            <Divider />
            <AllBookmarks $w={118} $ls={-0.36}>
              <svg width="16" height="16" viewBox="0 0 16 16"><path d="M.8 3.200a1 1 0 0 1 1-1h4l1.600 1.600h6.800a1 1 0 0 1 1 1v7.800a1 1 0 0 1-1 1H1.800a1 1 0 0 1-1-1z" fill="none" stroke="#5f6b61" strokeWidth="1.300" /></svg>
              All Bookmarks
            </AllBookmarks>
          </Bookmarks>
        </ToolbarPanel>
      </ToolbarBack>

      <PageHeader>
        <Title>Welcome to My Static Website</Title>
        <Nav>
          <NavLink>Home</NavLink> <NavLink>About</NavLink> <NavLink>Contact</NavLink>
        </Nav>
      </PageHeader>
      <Main>
        <SectionTitle>Introduction</SectionTitle>
        <Paragraph>This is a simple static website hosted on Amazon S3.</Paragraph>
      </Main>
      <PageFooter>© 2024 My Static Website</PageFooter>

      <Taskbar>
        {apps.map(({ Icon, running, active }, i) => (
          <AppButton key={i} $active={active}>
            <Icon />
            {running && <Running $active={active} />}
          </AppButton>
        ))}
        <Tray>
          <TrayItem $w={32}>
            <svg width="16" height="16" viewBox="0 0 16 16">
              <path d="M8 0c2.500 1.300 5 1.300 7.500 1v6.500c0 4-3.500 7-7.500 8.500C4 14.500.5 11.500.5 7.500V1C3 1.300 5.500 1.300 8 0z" fill="#25b34b" />
              <path d="m4.300 7.800 2.700 2.700 4.800-5" fill="none" stroke="#fff" strokeWidth="1.800" />
            </svg>
          </TrayItem>
          <TrayItem $w={32}>
            <svg width="16" height="16" viewBox="0 0 16 16">
              <rect width="16" height="16" fill="#1b1e1f" />
              <path d="M6 4h7.500v8H6v-1.500h3.500L12 8.500 10 6H6z" fill="#6fa52a" />
              <path d="M2.200 8C4 5 7.500 4.800 9.500 7.500 7.500 11.500 4 11 2.200 8zM4.200 8C5.500 6.200 7 6.800 7.600 8 6.500 9.500 5.200 9.300 4.200 8z" fill="none" stroke="#6fa52a" strokeWidth="1" />
            </svg>
          </TrayItem>
          <TrayItem $w={32}>
            <svg width="16" height="16" viewBox="0 0 16 16">
              <path d="M3.500 11.500H1.500v-10h10v2" fill="none" stroke="#ddd" strokeWidth="1.100" />
              <path d="M9 14.500H4.500v-10h10V8" fill="none" stroke="#ddd" strokeWidth="1.100" />
              <path d="m9 7.500 7 4-7 4z" fill="#4e9a06" />
            </svg>
          </TrayItem>
          <TrayItem $w={32}>
            <svg width="18" height="18" viewBox="0 0 18 18">
              <path d="M2 7.500A7 7 0 0 1 15 5.500M15.500 1.500v4.300h-4.300M8 15.800A7 7 0 0 1 2.800 12M2 16v-4.300h4.300" fill="none" stroke="#ececec" strokeWidth="1.200" />
              <circle cx="13" cy="13" r="4.200" fill="#ff9a0c" />
            </svg>
          </TrayItem>
          <Language>ENG</Language>
          <TrayItem $w={32}>
            <svg width="16" height="16" viewBox="0 0 16 16" fill="none" stroke="#fff" strokeWidth="1.300">
              <path d="M.6 6.300a10.500 10.500 0 0 1 14.800 0M3 8.800a7 7 0 0 1 10 0M5.300 11.200a3.800 3.800 0 0 1 5.400 0" />
              <circle cx="8" cy="12.600" r=".8" fill="#fff" />
            </svg>
          </TrayItem>
          <TrayItem $w={16}>
            <svg width="17" height="16" viewBox="0 0 17 16" fill="none" stroke="#fff" strokeWidth="1.100">
              <path d="M1 5.800h2.600L7.300 2.400v11.200L3.600 10.200H1z" />
              <path d="M9.500 5.800c1 1.300 1 3.100 0 4.400M11.800 4c1.900 2.300 1.900 5.700 0 8M14 2.300c2.700 3.300 2.700 8.100 0 11.400" />
            </svg>
          </TrayItem>
          <TrayItem $w={32}>
            <svg width="16" height="16" viewBox="0 0 16 16">
              <rect x=".6" y="3.600" width="12.800" height="8.800" rx="2" fill="none" stroke="#fff" strokeWidth="1.100" />
              <rect x="2" y="5" width="4" height="6" rx=".8" fill="#fff" />
              <path d="M14.900 6.200v3.600" stroke="#fff" strokeWidth="1.400" />
            </svg>
          </TrayItem>
          <Clock>2:54 AM<br />8/29/2024</Clock>
          <TrayItem $w={30}>
            <svg width="16" height="16" viewBox="0 0 16 16" fill="none" stroke="#fff" strokeWidth="1.200">
              <path d="M8 1.200a4.600 4.600 0 0 0-4.600 4.600v3L1.900 12h12.200l-1.500-3.200v-3A4.600 4.600 0 0 0 8 1.200zM6.300 12.300a1.700 1.700 0 0 0 3.400 0" />
            </svg>
          </TrayItem>
          <TrayItem $w={43}>
            <svg width="24" height="24" viewBox="0 0 24 24">
              <defs>
                <linearGradient id="c1" x1="0" y1="0" x2="0" y2="1"><stop stopColor="#1f8df0" /><stop offset=".6" stopColor="#3cc39a" /><stop offset="1" stopColor="#d9d33a" /></linearGradient>
                <linearGradient id="c2" x1="0" y1="0" x2="0" y2="1"><stop stopColor="#a46bf5" /><stop offset="1" stopColor="#f0638f" /></linearGradient>
              </defs>
              <path d="M5.500 1h8.200c1.600 0 2.300 1.200 2.800 3l.5 2h-3c-1.500 0-2.300 1-2.700 2.500L9.500 15c-.5 1.500-1.200 2-2.500 2H3C.8 17 0 15.500.6 13.500L3.300 3C3.700 1.700 4.300 1 5.500 1z" fill="url(#c1)" />
              <path d="M15.500 6h5c2 0 3 1.300 2.500 3.500l-2 7.500h-8.500l2-8.500C14.900 7 15 6 15.500 6z" fill="url(#c2)" />
              <path d="M12 1h2c1.400 0 2 1.200 2.500 3l.5 2h-3z" fill="#1b4fc4" />
              <rect x="5.500" y="16" width="18.500" height="7.500" rx="2" fill="#ffc60b" />
              <text x="14.750" y="22.200" fontSize="6.500" fontWeight="700" textAnchor="middle" fill="#222" fontFamily="Open Sans, sans-serif">PRE</text>
            </svg>
          </TrayItem>
        </Tray>
      </Taskbar>
    </Screen>
  );
}
